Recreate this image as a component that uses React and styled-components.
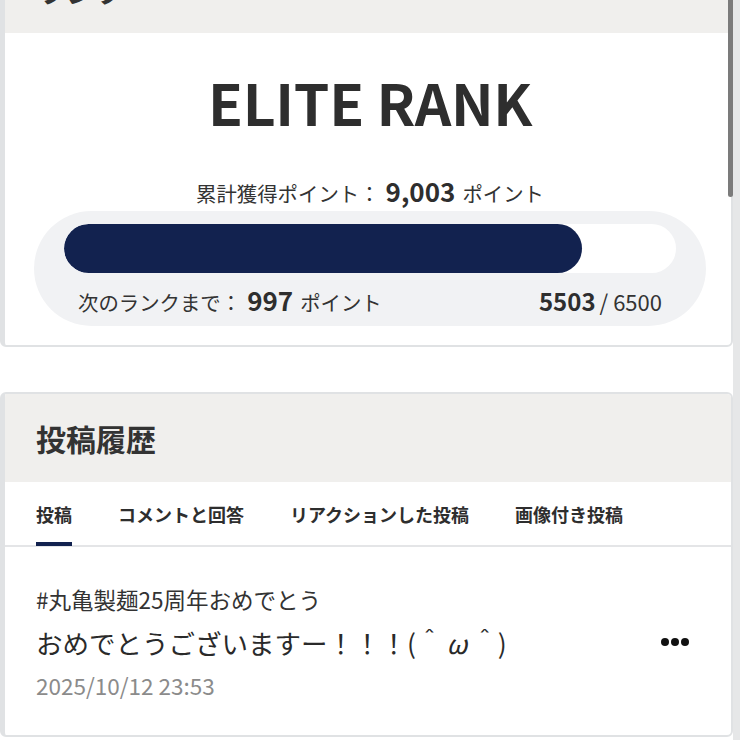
import React from "react";
import styled, { createGlobalStyle } from "styled-components";

const Global = createGlobalStyle`
  html, body { margin: 0; padding: 0; background: #ffffff; overflow: hidden; }
  body { font-family: "Noto Sans CJK JP", "Noto Sans", sans-serif; color: #333333; }
`;

const Page = styled.div`
  width: 733px;
  margin-top: -57px;
  display: flex;
  flex-direction: column;
  gap: 45px;
`;

const Card = styled.section`
  background: #ffffff;
  border: 2px solid #e0e2e4;
  border-left-width: 5px;
  border-radius: 6px;
  overflow: hidden;
`;

const CardHeader = styled.header`
  height: 88px;
  background: #f0efed;
  display: flex;
  align-items: center;
  padding: 0 31px;
`;

const Title = styled.h2`
  margin: 0;
  font-size: 30px;
  line-height: 40px;
  font-weight: 700;
  color: #333333;
`;

const RankBody = styled.div`
  padding: 40px 25px 19px 29px;
  display: flex;
  flex-direction: column;
  align-items: stretch;
`;

const RankName = styled.div`
  font-size: 57px;
  line-height: 57px;
  font-weight: 700;
  text-align: center;
  color: #2e2e2e;
  letter-spacing: -0.3px;
`;

const Total = styled.div`
  margin-top: 46px;
  height: 30px;
  display: flex;
  align-items: baseline;
  justify-content: center;
  font-size: 20.4px;
  line-height: 30px;
  color: #333333;
`;

const Num = styled.span`
  font-weight: 700;
  font-size: ${(p) => p.$size || 26}px;
  margin: 0 ${(p) => p.$gap ?? 7}px 0 ${(p) => p.$lead ?? 6}px;
  color: #2e2e2e;
`;

const Meter = styled.div`
  margin-top: 5px;
  background: #f1f2f4;
  border-radius: 58px;
  padding: 13px 30px 13px;
`;

const Track = styled.div`
  height: 49px;
  border-radius: 25px;
  background: #ffffff;
  overflow: hidden;
`;

const Fill = styled.div`
  height: 100%;
  background: #12224f;
  border-radius: 25px;
`;

const MeterInfo = styled.div`
  margin-top: 14px;
  padding: 0 14px;
  height: 26px;
  display: flex;
  align-items: baseline;
  justify-content: space-between;
  font-size: 20.4px;
  line-height: 26px;
`;

const Ratio = styled.span`
  font-size: 22px;
  color: #333333;
`;

const Tabs = styled.nav`
  display: flex;
  gap: 46px;
  padding: 0 31px;
  border-bottom: 2px solid #e4e5e7;
`;

const Tab = styled.div`
  padding: 20px 0 16px;
  font-size: 18px;
  line-height: 24px;
  font-weight: 700;
  color: #2e2e2e;
  border-bottom: 4px solid ${(p) => (p.$active ? "#12224f" : "transparent")};
  margin-bottom: -1px;
`;

const Post = styled.article`
  padding: 37px 42px 36px 31px;
  display: flex;
  align-items: center;
  gap: 16px;
`;

const PostText = styled.div`
  flex: 1;
  display: flex;
  flex-direction: column;
`;

const Hashtag = styled.div`
  font-size: 22.5px;
  line-height: 30px;
  color: #333333;
`;

const Body = styled.div`
  margin-top: 11px;
  font-size: 26.5px;
  line-height: 36px;
  color: #2a2a2a;
`;

const Face = styled.span`
  display: inline-block;
  margin: 0 ${(p) => p.$space}px;
  font-style: ${(p) => (p.$italic ? "italic" : "normal")};
`;

const DateText = styled.div`
  margin-top: 10px;
  font-size: 22.5px;
  line-height: 28px;
  color: #8b8b8b;
`;

const MoreButton = styled.button`
  border: 0;
  background: none;
  padding: 0;
  display: flex;
  cursor: pointer;
`;

const ScrollTrack = styled.div`
  position: fixed;
  top: 0;
  right: 0;
  width: 7px;
  height: 100vh;
  background: #e6e7e8;
`;

const ScrollThumb = styled.div`
  position: fixed;
  top: 0;
  right: 7px;
  width: 5px;
  height: 197px;
  background: #7b7b7b;
  border-radius: 0 0 3px 3px;
`;

export default function App() {
  const current = 5503;
  const goal = 6500;
  return (
    <>
      <Global />
      <Page>
        <Card>
          <CardHeader>
            <Title>ランク</Title>
          </CardHeader>
          <RankBody>
            <RankName>ELITE RANK</RankName>
            <Total>
              累計獲得ポイント：<Num>9,003</Num>ポイント
            </Total>
            <Meter>
              <Track>
                <Fill style={{ width: `${(current / goal) * 100}%` }} />
              </Track>
              <MeterInfo>
                <span>
                  次のランクまで：<Num>997</Num>ポイント
                </span>
                <Ratio>
                  <Num $size={24} $lead={0} $gap={4}>5503</Num>/ 6500
                </Ratio>
              </MeterInfo>
            </Meter>
          </RankBody>
        </Card>
        <Card>
          <CardHeader>
            <Title>投稿履歴</Title>
          </CardHeader>
          <Tabs>
            <Tab $active>投稿</Tab>
            <Tab>コメントと回答</Tab>
            <Tab>リアクションした投稿</Tab>
            <Tab>画像付き投稿</Tab>
          </Tabs>
          <Post>
            <PostText>
              <Hashtag>#丸亀製麺25周年おめでとう</Hashtag>
              <Body>
                おめでとうございますー！！！(＾<Face $space={4} $italic>ω</Face>＾)
              </Body>
              <DateText>2025/10/12 23:53</DateText>
            </PostText>
            <MoreButton aria-label="more">
              <svg width="28" height="10" viewBox="0 0 28 10">
                <circle cx="4" cy="5" r="4" fill="#111" />
                <circle cx="14" cy="5" r="4" fill="#111" />
                <circle cx="24" cy="5" r="4" fill="#111" />
              </svg>
            </MoreButton>
          </Post>
        </Card>
      </Page>
      <ScrollTrack />
      <ScrollThumb />
    </>
  );
}
